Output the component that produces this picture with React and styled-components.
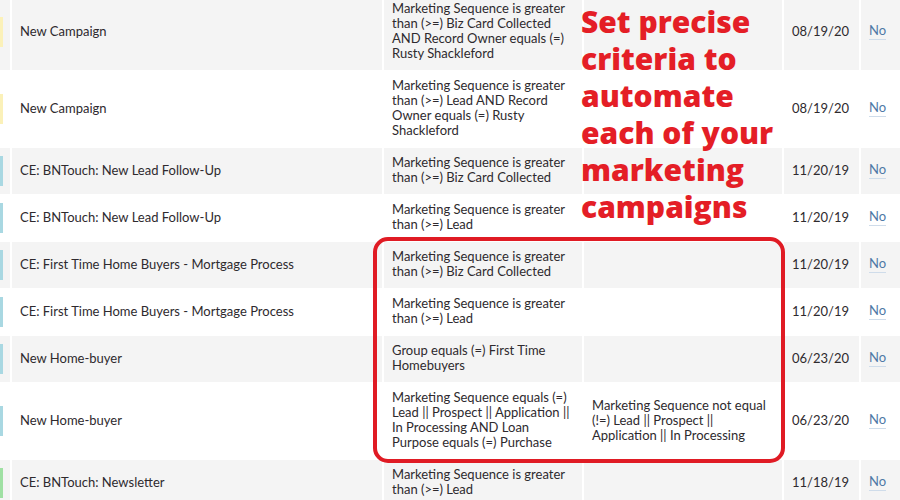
import React from "react";
import styled, { createGlobalStyle } from "styled-components";

const Global = createGlobalStyle`
  html, body { margin: 0; padding: 0; background: #ffffff; }
  body { width: 900px; height: 500px; overflow: hidden; }
  #root { width: 900px; height: 500px; overflow: hidden; }
`;

const Page = styled.div`
  position: relative;
  width: 900px;
  height: 500px;
  overflow: hidden;
  background: #ffffff;
  font-family: "Lato", "Open Sans", sans-serif;
`;

const Grid = styled.div`
  display: grid;
  grid-template-columns: 10px 370px 198px 198px 75px 60px;
  column-gap: 2px;
  row-gap: 1px;
  margin-top: -6px;
`;

const Row = styled.div`
  display: contents;
`;

const Cell = styled.div`
  background: ${(p) => (p.$shade ? "#f4f4f4" : "#ffffff")};
  display: flex;
  align-items: center;
  padding: 7px 8px 9px;
  font-size: 13px;
  line-height: 15px;
  color: #2e2a2e;
`;

const StripeCell = styled.div`
  background: ${(p) => (p.$shade ? "#f4f4f4" : "#ffffff")};
  display: flex;
  align-items: center;
`;

const Stripe = styled.div`
  width: 3px;
  height: 30px;
  background: ${(p) => p.$color};
`;

const YesNo = styled.span`
  color: #4f79a6;
  border-bottom: 1px solid #cfdcea;
  padding-bottom: 1px;
`;

const Callout = styled.div`
  position: absolute;
  left: 581px;
  top: 3px;
  font-family: "Open Sans", sans-serif;
  font-weight: 800;
  font-size: 30px;
  line-height: 37px;
  color: #e41e26;
`;

const Highlight = styled.div`
  position: absolute;
  left: 373px;
  top: 237px;
  width: 412px;
  height: 226px;
  box-sizing: border-box;
  border: 4px solid #e01b24;
  border-radius: 15px;
`;

const colors = {
  yellow: "#fbf1b9",
  blue: "#a9d8e2",
  green: "#9fe0a3",
};

const rows = [
  {
    c: "yellow",
    name: "New Campaign",
    a: "Marketing Sequence is greater than (>=) Biz Card Collected AND Record Owner equals (=) Rusty Shackleford",
    b: "",
    date: "08/19/20",
  },
  {
    c: "yellow",
    name: "New Campaign",
    a: "Marketing Sequence is greater than (>=) Lead AND Record Owner equals (=) Rusty Shackleford",
    b: "",
    date: "08/19/20",
  },
  {
    c: "blue",
    name: "CE: BNTouch: New Lead Follow-Up",
    a: "Marketing Sequence is greater than (>=) Biz Card Collected",
    b: "",
    date: "11/20/19",
  },
  {
    c: "blue",
    name: "CE: BNTouch: New Lead Follow-Up",
    a: "Marketing Sequence is greater than (>=) Lead",
    b: "",
    date: "11/20/19",
  },
  {
    c: "blue",
    name: "CE: First Time Home Buyers - Mortgage Process",
    a: "Marketing Sequence is greater than (>=) Biz Card Collected",
    b: "",
    date: "11/20/19",
  },
  {
    c: "blue",
    name: "CE: First Time Home Buyers - Mortgage Process",
    a: "Marketing Sequence is greater than (>=) Lead",
    b: "",
    date: "11/20/19",
  },
  {
    c: "blue",
    name: "New Home-buyer",
    a: "Group equals (=) First Time Homebuyers",
    b: "",
    date: "06/23/20",
  },
  {
    c: "blue",
    name: "New Home-buyer",
    a: "Marketing Sequence equals (=) Lead || Prospect || Application || In Processing AND Loan Purpose equals (=) Purchase",
    b: "Marketing Sequence not equal (!=) Lead || Prospect || Application || In Processing",
    date: "06/23/20",
  },
  {
    c: "green",
    name: "CE: BNTouch: Newsletter",
    a: "Marketing Sequence is greater than (>=) Lead",
    b: "",
    date: "11/18/19",
  },
];

export default function App() {
  return (
    <Page>
      <Global />
      <Grid>
        {rows.map((r, i) => {
          const shade = i % 2 === 0;
          return (
            <Row key={i}>
              <StripeCell $shade={shade}>
                <Stripe $color={colors[r.c]} />
              </StripeCell>
              <Cell $shade={shade}>{r.name}</Cell>
              <Cell $shade={shade}>{r.a}</Cell>
              <Cell $shade={shade}>{r.b}</Cell>
              <Cell $shade={shade}>{r.date}</Cell>
              <Cell $shade={shade}>
                <YesNo>No</YesNo>
              </Cell>
            </Row>
          );
        })}
      </Grid>
      <Callout>
        Set precise
        <br />
        criteria to
        <br />
        automate
        <br />
        each of your
        <br />
        marketing
        <br />
        campaigns
      </Callout>
      <Highlight />
    </Page>
  );
}
